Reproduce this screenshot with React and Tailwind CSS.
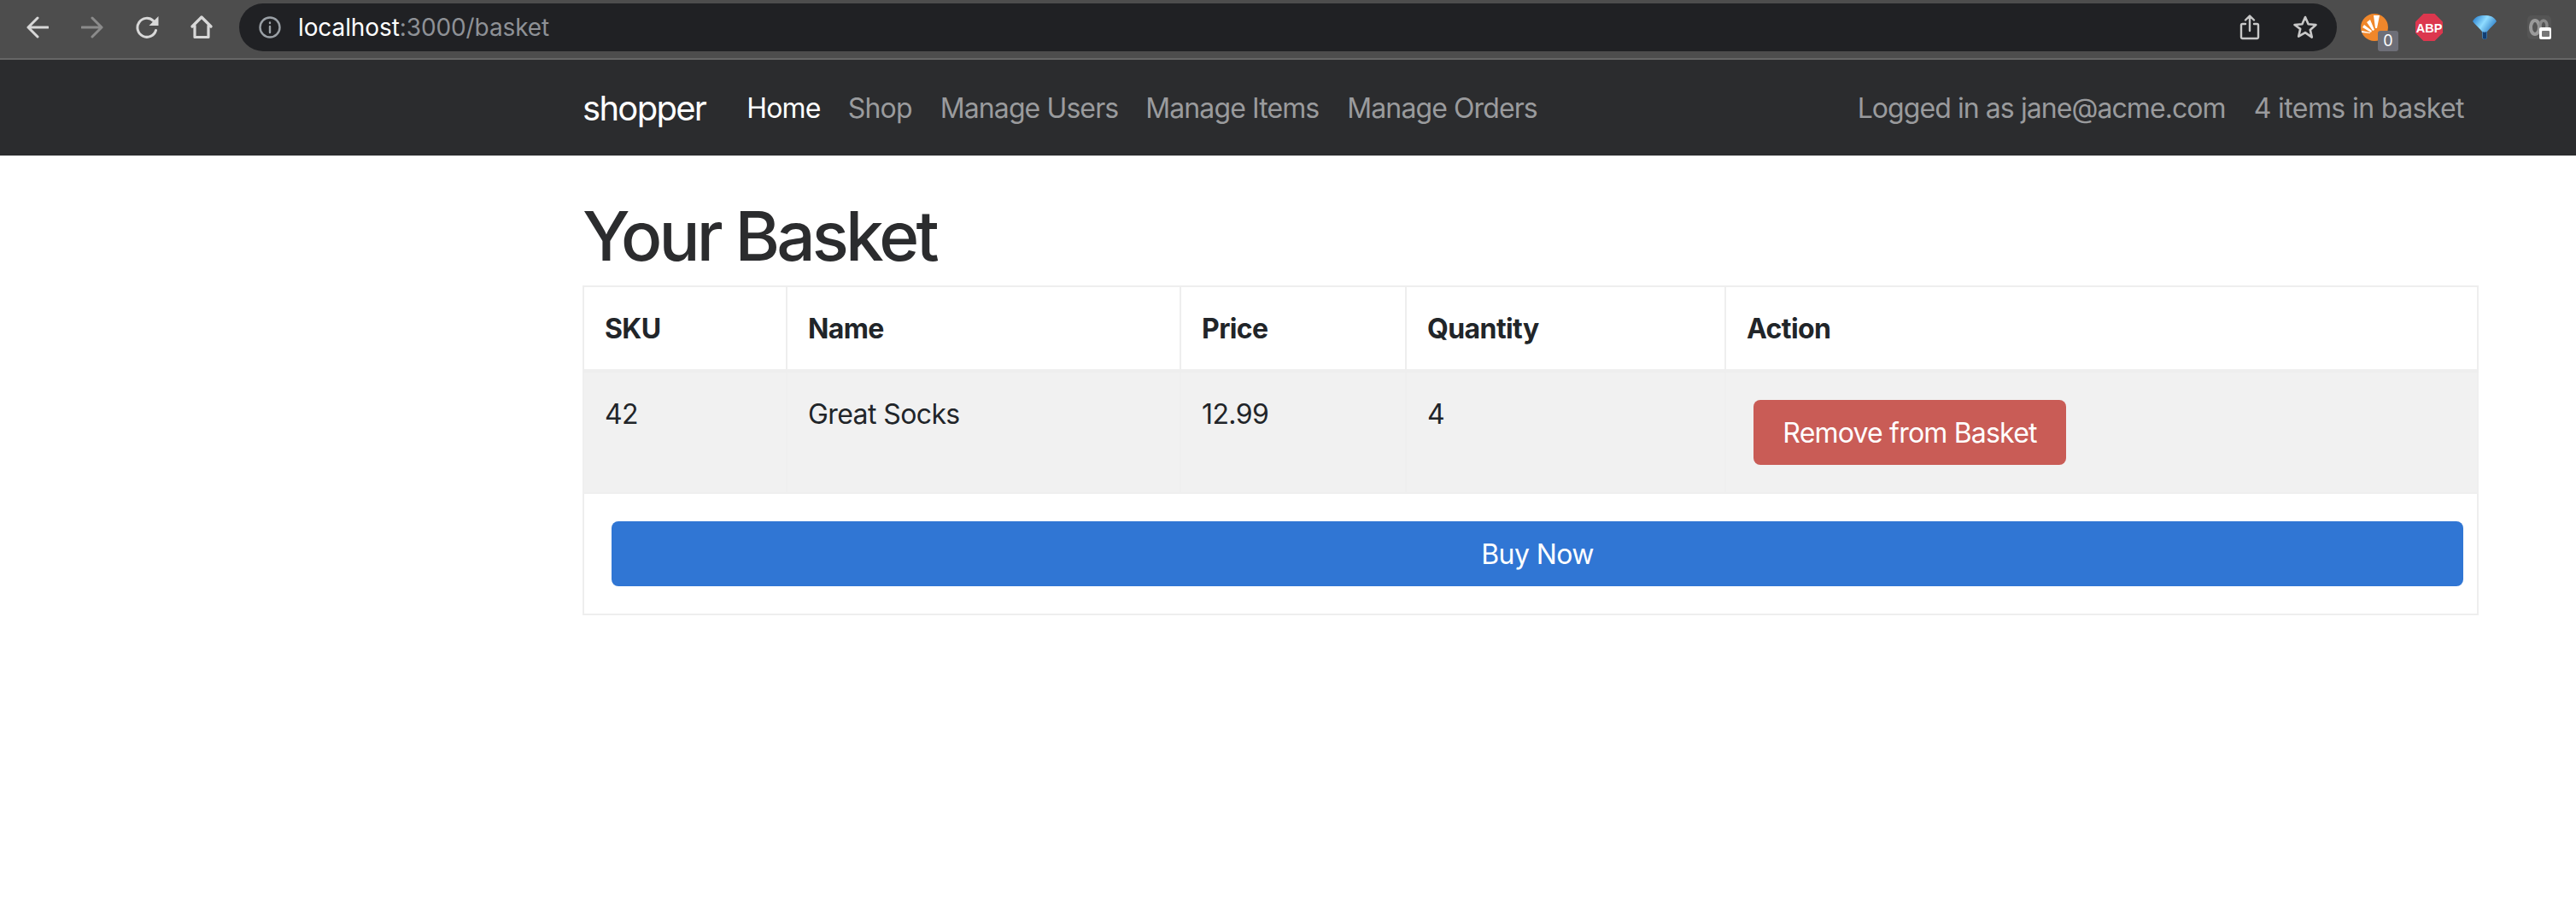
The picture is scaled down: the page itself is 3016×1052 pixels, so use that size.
import React from 'react';

const Icon = ({ className, children, w = 32, h = 32, fill = 'none', stroke = 'currentColor', sw = 3 }) => (
  <svg
    width={w}
    height={h}
    viewBox={`0 0 ${w} ${h}`}
    fill={fill}
    stroke={stroke}
    strokeWidth={sw}
    strokeLinecap="round"
    strokeLinejoin="round"
    className={className}
  >
    {children}
  </svg>
);

const BrowserBar = () => (
  <div className="flex h-[70px] items-start border-b-2 border-[#666666] bg-[#4d4d4d]">
    <div className="flex h-[64px] items-center pl-[31px]">
      <Icon w={26} h={26} className="text-[#d8d8d8]">
        <path d="M25 13H2M13 2L2 13l11 11" />
      </Icon>
      <Icon w={26} h={26} className="ml-[38px] text-[#8b8b8b]">
        <path d="M1 13h23M13 2l11 11-11 11" />
      </Icon>
      <Icon w={28} h={28} className="ml-[38px] text-[#d8d8d8]">
        <path d="M23.5 17.5a11 11 0 1 1-3-11.2" />
        <path d="M26.5 1v11h-11z" fill="currentColor" stroke="none" />
      </Icon>
      <Icon w={26} h={28} className="ml-[36px] text-[#d8d8d8]" sw={3.2}>
        <path d="M2 13L13 2l11 11M5 12v13.5h16V12" />
      </Icon>
    </div>
    <div className="ml-[31px] mt-[4px] flex h-[56px] w-[2456px] items-center rounded-[28px] bg-[#202124] pl-[23px]">
      <Icon w={26} h={26} className="text-[#9aa0a6]" sw={2.4}>
        <circle cx="13" cy="13" r="11.5" />
        <path d="M13 12v7M13 7.5v.5" />
      </Icon>
      <div className="ml-[20px] font-['Inter',sans-serif] text-[28px] leading-none tracking-[-0.1px] text-white">
        localhost<span className="text-[#8e9196]">:3000/basket</span>
      </div>
      <Icon w={24} h={30} className="ml-auto text-[#c8c8c8]" sw={2.4}>
        <path d="M7 11H3.5A1.5 1.5 0 0 0 2 12.500V26.500A1.500 1.500 0 0 0 3.500 28h17a1.500 1.500 0 0 0 1.500-1.500V12.500A1.500 1.500 0 0 0 20.500 11H17M12 19V2M7 6.500L12 1.500l5 5" />
      </Icon>
      <Icon w={30} h={30} className="ml-[38px] mr-[22px] text-[#c8c8c8]" sw={2.6}>
        <path d="M15 3l3.600 8.200 8.900.800-6.700 5.900 2 8.700L15 21.100 7.200 25.600l2-8.700L2.500 12l8.900-.800z" />
      </Icon>
    </div>
    <div className="ml-[28px] mt-[16px] flex items-start">
      <div className="relative h-[32px] w-[32px]">
        <svg width="32" height="32" viewBox="0 0 32 32">
          <circle cx="16" cy="16" r="16" fill="#f0872b" />
          <path d="M15 2h7l-3 15h-2z M7 10l4-3 5 12-2 1z M2 16l2-3 9 7-1 2z M1 22v-2l10 2v1z" fill="#ffffff" />
        </svg>
        <div className="absolute left-[20px] top-[20px] flex h-[24px] w-[24px] items-center justify-center rounded-[3px] bg-[#6e6f78] font-['Inter',sans-serif] text-[18px] leading-none text-white">
          0
        </div>
      </div>
      <svg width="32" height="32" viewBox="0 0 32 32" className="ml-[32px]">
        <path d="M9.500 0h13L32 9.500v13L22.500 32h-13L0 22.500v-13z" fill="#dc374e" />
        <text x="16" y="21.500" textAnchor="middle" fill="#ffffff" fontFamily="'Liberation Sans', sans-serif" fontWeight="700" fontSize="14.500">ABP</text>
      </svg>
      <svg width="28" height="28" viewBox="0 0 28 28" className="ml-[35px] mt-[2px]">
        <defs>
          <linearGradient id="funnel" x1="0" y1="0" x2="1" y2="0.700">
            <stop offset="0" stopColor="#1b74c9" />
            <stop offset="0.450" stopColor="#8fdcff" />
            <stop offset="1" stopColor="#0f5fb4" />
          </linearGradient>
        </defs>
        <path d="M0 7C3 1 8 0 14 0s11 1 14 7c-3 4-8 8-11 12l-.5 8q-2.500 2-5 0l-.5-8C8 15 3 11 0 7z" fill="url(#funnel)" />
        <path d="M11.500 19q2.500 1.500 5 0l-.5 8q-2 1.500-4 0z" fill="#123f74" />
      </svg>
      <div className="relative ml-[36px] mt-[2px] h-[28px] w-[28px] rounded-[5px] bg-[#555555]">
        <svg width="28" height="28" viewBox="0 0 28 28">
          <ellipse cx="9" cy="14" rx="5" ry="8" fill="none" stroke="#9a9a9a" strokeWidth="4" />
          <ellipse cx="19" cy="12" rx="4" ry="6" fill="none" stroke="#8a8a8a" strokeWidth="3.500" />
        </svg>
        <div className="absolute left-[14px] top-[14px] flex h-[14px] w-[14px] items-center justify-center rounded-[2px] bg-white">
          <div className="h-[7px] w-[9px] rounded-[1px] bg-[#777777]" />
        </div>
      </div>
    </div>
  </div>
);

const NavBar = () => (
  <nav className="flex h-[112px] items-center bg-[#2b2c2e] pt-[2px] pl-[682px] pr-[131px] font-['Inter',sans-serif] text-[32px] leading-[48px]">
    <span className="text-[40px] tracking-[-1.7px] text-white">shopper</span>
    <a className="ml-[48px] tracking-[-0.8px] text-white">Home</a>
    <a className="ml-[32px] tracking-[-0.8px] text-[#9a9b9d]">Shop</a>
    <a className="ml-[33px] tracking-[-0.9px] text-[#9a9b9d]">Manage Users</a>
    <a className="ml-[32px] tracking-[-0.9px] text-[#9a9b9d]">Manage Items</a>
    <a className="ml-[33px] tracking-[-0.9px] text-[#9a9b9d]">Manage Orders</a>
    <span className="ml-auto tracking-[-0.93px] text-[#9a9b9d]">Logged in as jane@acme.com</span>
    <span className="ml-[33px] tracking-[-0.6px] text-[#9a9b9d]">4 items in basket</span>
  </nav>
);

const headers = [
  ['SKU', 'w-[238px]'],
  ['Name', 'w-[461px]'],
  ['Price', 'w-[264px]'],
  ['Quantity', 'w-[374px]'],
  ['Action', 'w-[881px]'],
];

const BasketTable = () => (
  <table className="w-[2218px] table-fixed border-collapse border-2 border-[#eeeeee] font-['Inter',sans-serif] text-[32px] leading-[48px] tracking-[-0.6px] text-[#212529]">
    <thead>
      <tr>
        {headers.map(([label, width]) => (
          <th key={label} className={`${width} border-2 border-b-4 border-[#eeeeee] px-[24px] pt-[25px] pb-[23px] text-left font-bold`}>
            {label}
          </th>
        ))}
      </tr>
    </thead>
    <tbody>
      <tr className="bg-[#f1f1f1]">
        <td className="border-2 border-[#efefef] px-[24px] pt-[25px] pb-[23px] align-top">42</td>
        <td className="border-2 border-[#efefef] px-[24px] pt-[25px] pb-[23px] align-top">Great Socks</td>
        <td className="border-2 border-[#efefef] px-[24px] pt-[25px] pb-[23px] align-top">12.99</td>
        <td className="border-2 border-[#efefef] px-[24px] pt-[25px] pb-[23px] align-top">4</td>
        <td className="border-2 border-[#efefef] p-[24px] align-top">
          <button className="m-[8px] block h-[76px] w-[366px] rounded-[8px] bg-[#c95c56] pt-[2px] tracking-[-0.8px] text-white">Remove from Basket</button>
        </td>
      </tr>
      <tr>
        <td colSpan={5} className="p-[24px]">
          <button className="m-[8px] block h-[76px] w-[2168px] rounded-[8px] bg-[#3076d4] pt-[2px] text-white">Buy Now</button>
        </td>
      </tr>
    </tbody>
  </table>
);

export default function App() {
  return (
    <div className="h-[1052px] overflow-hidden bg-white">
      <BrowserBar />
      <NavBar />
      <main className="pl-[682px]">
        <h1 className="mt-[46px] mb-[10px] font-['Inter',sans-serif] text-[80px] leading-[96px] font-medium tracking-[-3.8px] text-[#2b2c2e]">
          Your Basket
        </h1>
        <BasketTable />
      </main>
    </div>
  );
}
